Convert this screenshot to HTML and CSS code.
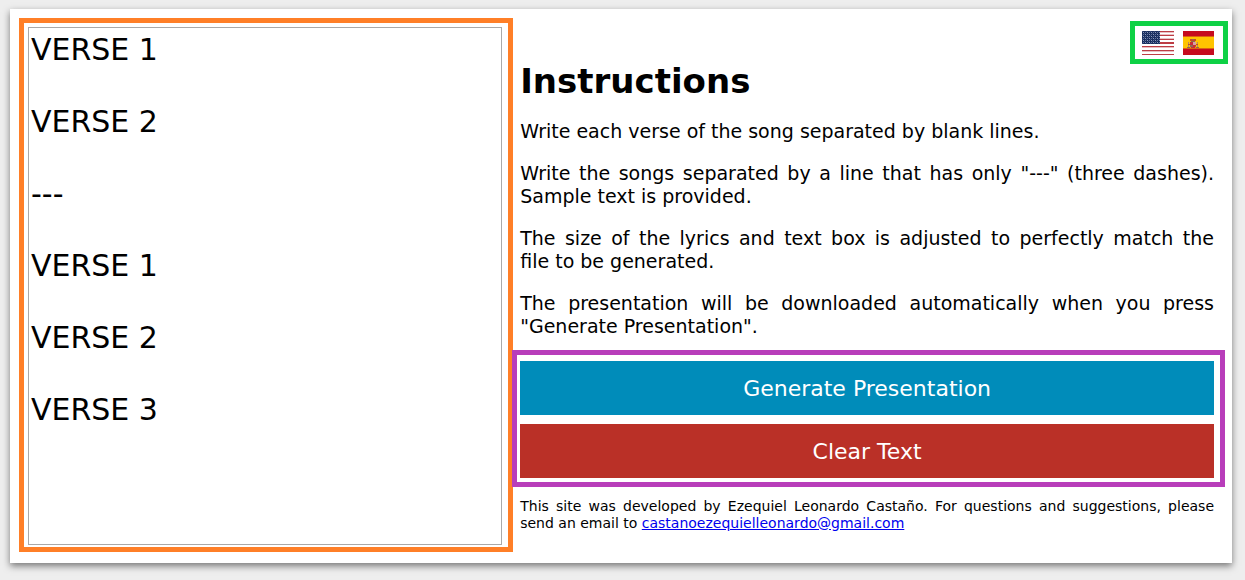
FILE: index.html
```html
<!DOCTYPE html>
<html lang="en">
<head>
<meta charset="utf-8">
<meta name="viewport" content="width=device-width, initial-scale=1">
<title>Song Presentation Generator</title>
<link rel="stylesheet" href="styles.css">
</head>
<body>
<main class="card">
  <section class="editor">
    <textarea class="lyrics" aria-label="Lyrics" spellcheck="false">VERSE 1

VERSE 2

---

VERSE 1

VERSE 2

VERSE 3</textarea>
  </section>
  <section class="info">
    <h1 class="title">Instructions</h1>
    <p class="text">Write each verse of the song separated by blank lines.</p>
    <p class="text">Write the songs separated by a line that has only "---" (three dashes). Sample text is provided.</p>
    <p class="text">The size of the lyrics and text box is adjusted to perfectly match the file&nbsp;to be generated.</p>
    <p class="text">The presentation will be downloaded automatically when you press "Generate Presentation".</p>
    <div class="actions">
      <button class="button generate" type="button">Generate Presentation</button>
      <button class="button clear" type="button">Clear Text</button>
    </div>
    <p class="credits">This site was developed by Ezequiel Leonardo Castaño. For questions and suggestions, please send an email to <a href="mailto:castanoezequielleonardo@gmail.com">castanoezequielleonardo@gmail.com</a></p>
  </section>
  <nav class="languages" aria-label="Language">
    <a class="flag" href="#en" aria-label="English">
      <svg width="32" height="24" viewBox="0 0 32 24" shape-rendering="crispEdges">
        <defs>
          <pattern id="stars" width="4" height="4" patternUnits="userSpaceOnUse">
            <path fill="#8d99ba" d="M1 1h1v1H1zM3 3h1v1H3z"/>
            <path fill="#62739e" d="M3 1h1v1H3zM1 3h1v1H1z"/>
            <path fill="#34487a" d="M2 2h1v1H2zM0 0h1v1H0z"/>
          </pattern>
        </defs>
        <path fill="#fff" d="M0 0h32v24H0z"/>
        <path fill="#bd3d44" d="M0 0h32v1H0zM0 4h32v1H0zM0 8h32v1H0zM0 11h32v2H0zM0 15h32v1H0zM0 19h32v1H0zM0 23h32v1H0z"/>
        <path fill="#e9bfc2" d="M0 1h32v1H0zM0 3h32v1H0zM0 7h32v1H0zM0 16h32v1H0zM0 20h32v1H0z"/>
        <path fill="#192f5d" d="M0 0h18v13H0z"/>
        <path fill="url(#stars)" d="M0 0h18v13H0z"/>
      </svg>
    </a>
    <a class="flag" href="#es" aria-label="Español">
      <svg width="31" height="24" viewBox="0 0 31 24">
        <path fill="#c60b1e" d="M0 0h31v24H0z"/>
        <path fill="#ffc400" d="M0 6h31v11H0z"/>
        <path fill="#dc6411" d="M0 5h31v1H0zM0 17h31v1H0z"/>
        <path fill="#b9895f" d="M5 11h1v6H5zM14 11h1v6h-1z"/>
        <path fill="#c44b27" d="M7 8h6v2H7zM5 13h2v1H5zM13 13h2v1h-2z"/>
        <path fill="#c92b36" d="M7 11h6v4l-1 2H8l-1-2z"/>
        <path fill="#d5a1a6" d="M10 11h3v3h-3z"/>
        <path fill="#8d6a55" d="M9 8h2v1H9zM8 10h4v1H8zM7 14h3v2H7zM4 16h3v1H4zM13 16h3v1h-3z"/>
      </svg>
    </a>
  </nav>
</main>
</body>
</html>
```
FILE: styles.css
```css
* {
  box-sizing: border-box;
}

body {
  margin: 0;
  padding: 9px 13px 17px 10px;
  background: #eee;
  color: #000;
  font-family: Verdana, "DejaVu Sans", sans-serif;
}

.card {
  position: relative;
  display: grid;
  grid-template-columns: minmax(0, 416fr) minmax(0, 584fr);
  column-gap: 7px;
  padding: 9px 18px 11px 9px;
  background: #fff;
  box-shadow: 0 3px 7px rgba(0, 0, 0, 0.5);
}

.editor {
  display: flex;
  padding: 4px 6px 2px 4px;
  border: 5px solid #ff7f27;
}

.lyrics {
  flex: 1;
  min-width: 0;
  margin: 0;
  padding: 4px 2px;
  border: 1px solid #a9a9a9;
  background: #fff;
  color: #000;
  font: inherit;
  font-size: 30px;
  line-height: 36px;
  resize: none;
  overflow: auto;
}

.info {
  padding: 43px 0 20px;
}

.title {
  margin: 0 0 18px;
  font-size: 34px;
  line-height: 41px;
}

.text {
  margin: 0 0 19px;
  font-size: 19px;
  line-height: 23px;
  text-align: justify;
}

.actions {
  position: relative;
  display: grid;
  gap: 9px;
  margin: -7px -11px 11px -8px;
  padding: 6px 6px 4px 3px;
  border: 5px solid #b83dba;
}

.button {
  padding: 15px 14px 13px;
  border: 0;
  color: #fff;
  font: inherit;
  font-size: 22px;
  line-height: 26px;
  cursor: pointer;
}

.generate {
  background: #008cba;
}

.clear {
  background: #ba3027;
}

.credits {
  margin: 0;
  font-size: 14px;
  line-height: 17px;
  text-align: justify;
}

.credits a {
  color: #00e;
}

.languages {
  position: absolute;
  top: 12px;
  right: 4px;
  display: flex;
  gap: 9px;
  padding: 5px 9px 4px 7px;
  border: 5px solid #0ed145;
}

.flag,
.flag svg {
  display: block;
}
```
